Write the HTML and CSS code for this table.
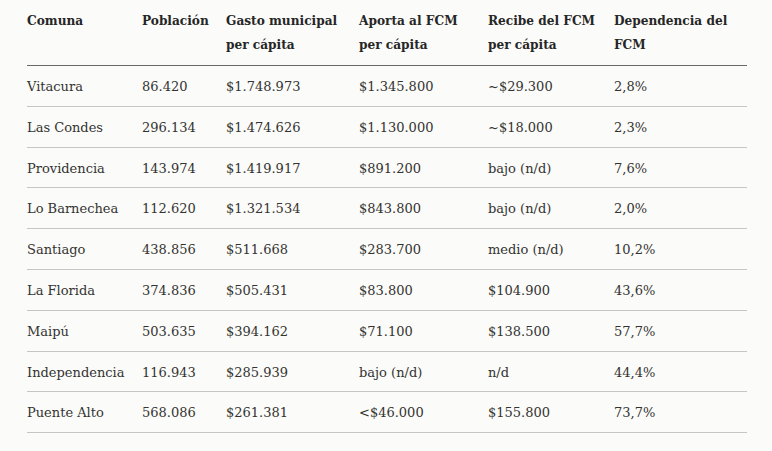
FILE: index.html
```html
<!DOCTYPE html>
<html lang="es">
<head>
<meta charset="utf-8">
<link rel="stylesheet" href="styles.css">
</head>
<body>
<div class="wrap">
<table class="fcm">
  <colgroup>
    <col class="c1"><col class="c2"><col class="c3"><col class="c4"><col class="c5"><col class="c6">
  </colgroup>
  <thead>
    <tr>
      <th>Comuna</th>
      <th>Población</th>
      <th>Gasto municipal per cápita</th>
      <th>Aporta al FCM per cápita</th>
      <th>Recibe del FCM per cápita</th>
      <th>Dependencia del FCM</th>
    </tr>
  </thead>
  <tbody>
    <tr><td>Vitacura</td><td>86.420</td><td>$1.748.973</td><td>$1.345.800</td><td>~$29.300</td><td>2,8%</td></tr>
    <tr><td>Las Condes</td><td>296.134</td><td>$1.474.626</td><td>$1.130.000</td><td>~$18.000</td><td>2,3%</td></tr>
    <tr><td>Providencia</td><td>143.974</td><td>$1.419.917</td><td>$891.200</td><td>bajo (n/d)</td><td>7,6%</td></tr>
    <tr><td>Lo Barnechea</td><td>112.620</td><td>$1.321.534</td><td>$843.800</td><td>bajo (n/d)</td><td>2,0%</td></tr>
    <tr><td>Santiago</td><td>438.856</td><td>$511.668</td><td>$283.700</td><td>medio (n/d)</td><td>10,2%</td></tr>
    <tr><td>La Florida</td><td>374.836</td><td>$505.431</td><td>$83.800</td><td>$104.900</td><td>43,6%</td></tr>
    <tr><td>Maipú</td><td>503.635</td><td>$394.162</td><td>$71.100</td><td>$138.500</td><td>57,7%</td></tr>
    <tr><td>Independencia</td><td>116.943</td><td>$285.939</td><td>bajo (n/d)</td><td>n/d</td><td>44,4%</td></tr>
    <tr><td>Puente Alto</td><td>568.086</td><td>$261.381</td><td>&lt;$46.000</td><td>$155.800</td><td>73,7%</td></tr>
  </tbody>
</table>
</div>
</body>
</html>
```

FILE: styles.css
```css
html, body {
  margin: 0;
  padding: 0;
  background: #fbfbf9;
}
.wrap {
  padding: 0 26px 0 27px;
}
.fcm {
  width: 720px;
  border-collapse: collapse;
  table-layout: fixed;
  font-family: "DejaVu Serif", "Liberation Serif", serif;
  font-size: 13px;
  color: #333331;
}
.c1 { width: 115px; }
.c2 { width: 84px; }
.c3 { width: 133px; }
.c4 { width: 129px; }
.c5 { width: 126px; }
.c6 { width: 133px; }
.fcm th {
  text-align: left;
  vertical-align: top;
  font-family: "DejaVu Serif Condensed", "DejaVu Serif", serif;
  font-weight: 600;
  font-size: 13.5px;
  line-height: 24px;
  padding: 8px 8px 9px 0;
  border-bottom: 1px solid #6a6a6a;
  color: #262626;
}
.fcm td {
  line-height: 24px;
  padding: 9px 8px 6.8px 0;
  border-bottom: 1px solid #c6c6c6;
  white-space: nowrap;
}
```
